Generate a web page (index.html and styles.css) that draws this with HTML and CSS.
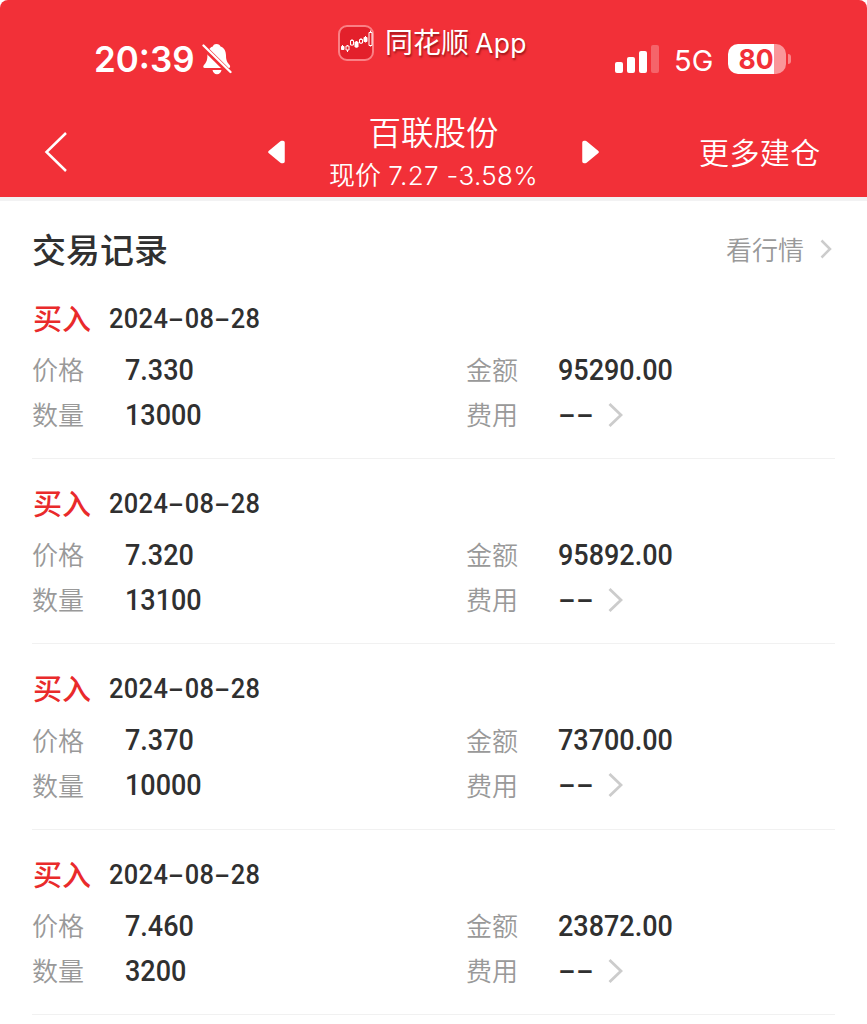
FILE: index.html
```html
<!DOCTYPE html>
<html lang="zh-CN">
<head>
<meta charset="utf-8">
<title>交易记录</title>
<link rel="stylesheet" href="styles.css">
</head>
<body>
<header class="header">
  <div class="status">
    <div class="clock">
      <span class="time">20:39</span>
      <svg class="bell" width="30" height="32" viewBox="0 0 30 32"><path fill="#fff" d="M14.5 1c-2.400 0-3.400 1.400-3.700 2.600C6.700 5 5.500 8.500 5.400 12.500c0 5.500-1.700 7.500-3.400 9.500-1.200 1.500-1 3 .8 3h24c1.500 0 1.700-1.500.8-3-2-2.200-3.600-4-3.600-9.500C23.800 8 22.300 5 18.500 3.600 18 2 16.800 1 14.500 1zM10.500 27h9c-.4 2.500-2.100 4.200-4.500 4.200S11 29.500 10.500 27z"/><path d="M1 3.500L29 31" stroke="#f23038" stroke-width="5.500"/><path d="M1.500 2.500L28.500 29" stroke="#fff" stroke-width="2.300" stroke-linecap="round"/></svg>
    </div>
    <div class="brand">
      <svg width="36" height="36" viewBox="0 0 36 36"><rect x="1" y="1" width="34" height="34" rx="8" fill="#e3202b" stroke="#fa8085" stroke-width="2"/><g stroke="#fff" fill="none" stroke-width="1"><path d="M4.500 20v5M14 14v6.500M18.500 16v6.500M23 13v6M27.500 11v6.500M32.500 5.500v16M9.500 20v7"/><path fill="#fff" d="M3.500 21.500h2.500v3H3.500zM17 17h3v5h-3zM26 12.500h3v4h-3z"/><path fill="#e3202b" d="M8 21h3v4H8zM12.500 15.500h3v4.500h-3zM21.500 14.500h3v3.500h-3zM31 7.500h3v13h-3z"/></g></svg>
      <span class="brand-name">同花顺<span class="app">App</span></span>
    </div>
    <div class="signals">
      <svg width="44" height="28" viewBox="0 0 44 28"><g fill="#fff"><rect y="17" width="8" height="11" rx="2"/><rect x="12" y="12" width="8" height="16" rx="2"/><rect x="24" y="6" width="8" height="22" rx="2"/><rect x="36" width="8" height="28" rx="2" opacity=".25"/></g></svg>
      <span class="net">5G</span>
      <div class="battery"><span>80</span></div>
      <i class="battery-cap"></i>
    </div>
  </div>
  <nav class="nav">
    <svg class="back" width="24" height="42" viewBox="0 0 24 42"><path d="M22 2L2.500 21 22 40" fill="none" stroke="#fff" stroke-width="2.500"/></svg>
    <svg class="prev" width="17" height="24" viewBox="0 0 17 24"><path d="M2 12L13.500 2.500h1.500v19h-1.500z" fill="#fff" stroke="#fff" stroke-width="3.500" stroke-linejoin="round"/></svg>
    <div class="stock">
      <h1>百联股份</h1>
      <p>现价 <span>7.27 -3.58%</span></p>
    </div>
    <svg class="next" width="17" height="24" viewBox="0 0 17 24"><path d="M15 12L3.500 2.500H2v19h1.500z" fill="#fff" stroke="#fff" stroke-width="3.500" stroke-linejoin="round"/></svg>
    <span class="more">更多建仓</span>
  </nav>
</header>
<main class="records">
  <div class="heading">
    <h2>交易记录</h2>
    <div class="quote">看行情<svg width="12" height="20" viewBox="0 0 12 20"><path d="M1.500 1.500L10 10l-8.500 8.500" fill="none" stroke="#ccc" stroke-width="2.500"/></svg></div>
  </div>
  <article class="record">
    <div class="deal"><b>买入</b><time>2024<i>-</i>08<i>-</i>28</time></div>
    <dl><dt>价格</dt><dd><span>7.330</span></dd><dt>金额</dt><dd><span>95290.00</span></dd>
    <dt>数量</dt><dd><span>13000</span></dd><dt>费用</dt><dd class="fee"><i>-</i><i>-</i><svg width="15" height="24" viewBox="0 0 15 24"><path d="M1.500 1L13 12 1.500 23" fill="none" stroke="#ccc" stroke-width="2.800"/></svg></dd></dl>
  </article>
  <article class="record">
    <div class="deal"><b>买入</b><time>2024<i>-</i>08<i>-</i>28</time></div>
    <dl><dt>价格</dt><dd><span>7.320</span></dd><dt>金额</dt><dd><span>95892.00</span></dd>
    <dt>数量</dt><dd><span>13100</span></dd><dt>费用</dt><dd class="fee"><i>-</i><i>-</i><svg width="15" height="24" viewBox="0 0 15 24"><path d="M1.500 1L13 12 1.500 23" fill="none" stroke="#ccc" stroke-width="2.800"/></svg></dd></dl>
  </article>
  <article class="record">
    <div class="deal"><b>买入</b><time>2024<i>-</i>08<i>-</i>28</time></div>
    <dl><dt>价格</dt><dd><span>7.370</span></dd><dt>金额</dt><dd><span>73700.00</span></dd>
    <dt>数量</dt><dd><span>10000</span></dd><dt>费用</dt><dd class="fee"><i>-</i><i>-</i><svg width="15" height="24" viewBox="0 0 15 24"><path d="M1.500 1L13 12 1.500 23" fill="none" stroke="#ccc" stroke-width="2.800"/></svg></dd></dl>
  </article>
  <article class="record">
    <div class="deal"><b>买入</b><time>2024<i>-</i>08<i>-</i>28</time></div>
    <dl><dt>价格</dt><dd><span>7.460</span></dd><dt>金额</dt><dd><span>23872.00</span></dd>
    <dt>数量</dt><dd><span>3200</span></dd><dt>费用</dt><dd class="fee"><i>-</i><i>-</i><svg width="15" height="24" viewBox="0 0 15 24"><path d="M1.500 1L13 12 1.500 23" fill="none" stroke="#ccc" stroke-width="2.800"/></svg></dd></dl>
  </article>
</main>
</body>
</html>
```
FILE: styles.css
```css
* { box-sizing: border-box; margin: 0; padding: 0; }
body { width: 867px; height: 1024px; overflow: hidden; background: #fff; color: #303030; font-family: Inter, "Noto Sans CJK SC", sans-serif; }
svg { display: block; flex: none; }
i { font-style: normal; }
.header { height: 201px; background: #f23038; border-bottom: 4px solid #f2f2f3; border-radius: 8px 8px 0 0; white-space: nowrap; }
.status { height: 107px; display: grid; grid-template-columns: 338px 277px 1fr; }
.clock { display: flex; align-items: center; height: 60px; margin-top: 29px; padding-left: 94px; color: #fff; }
.time { width: 108px; font-size: 36px; font-weight: 600; transform: scaleX(.97); transform-origin: left; }
.brand { display: flex; align-items: center; gap: 11px; height: 36px; margin-top: 25px; color: #fff; }
.brand-name { font-size: 28px; line-height: 36px; text-shadow: 1px 2px 2px rgba(90,0,0,.55); }
.app { margin-left: 6px; font-size: 26.5px; letter-spacing: .4px; }
.signals { display: flex; align-items: center; height: 60px; margin-top: 29px; color: #fff; }
.net { width: 54px; margin-left: 15px; padding-top: 2px; font-size: 29px; }
.battery { width: 58px; height: 30px; padding-right: 2px; border-radius: 10px; background: linear-gradient(90deg, #fff 46px, #fa969a 46px); color: #f23038; font-size: 26.500px; line-height: 30px; font-weight: 700; text-align: center; }
.battery-cap { width: 3px; height: 10px; margin-left: 2px; border-radius: 0 4px 4px 0; background: #fa8589; }
.nav { height: 90px; display: grid; grid-template-columns: 224px 17px 297px 17px 1fr; padding-left: 44px; align-items: center; color: #fff; }
.stock { height: 90px; padding-top: 1px; text-align: center; }
.stock h1 { font-size: 32.500px; line-height: 52px; font-weight: 350; }
.stock p { font-size: 26px; line-height: 32px; font-weight: 350; }
.stock p span { font-size: 26px; letter-spacing: .35px; }
.more { margin-left: 100px; padding-top: 2px; font-size: 30px; line-height: 40px; font-weight: 350; letter-spacing: .4px; }
.records { padding: 0 32px; }
.heading { height: 88px; display: flex; justify-content: space-between; align-items: center; padding-top: 7px; }
.heading h2 { font-size: 34px; font-weight: 500; }
.quote { display: flex; align-items: center; gap: 16px; margin-right: 3px; color: #999; font-size: 26px; font-weight: 350; }
.record { height: 185.4px; border-bottom: 1px solid #f1f1f1; }
.record:first-of-type { height: 170px; }
.record + .record { padding-top: 15.4px; }
.deal { height: 58px; display: flex; align-items: center; }
.deal b { width: 77px; padding: 3px 0 0 1px; color: #e92a2b; font-size: 29px; line-height: 40px; font-weight: 500; }
.deal time { display: flex; padding-top: 1px; font: 500 27px/40px Roboto, sans-serif; letter-spacing: .4px; transform: scaleX(.94); transform-origin: left; }
.deal time i { width: 17.5px; text-align: center; transform: scaleX(1.85); }
dl { display: grid; grid-template-columns: 93px 341px 92px 1fr; grid-auto-rows: 45px; align-items: center; }
dt { padding-top: 3px; color: #999; font-size: 26px; line-height: 40px; font-weight: 350; }
dd { display: flex; align-items: center; font: 500 29.5px/40px Roboto, sans-serif; }
dd span { display: block; transform: scaleX(.915); transform-origin: left; }
.fee i { width: 18px; text-align: center; transform: scaleX(1.75); }
.fee svg { margin-left: 14px; }
```
